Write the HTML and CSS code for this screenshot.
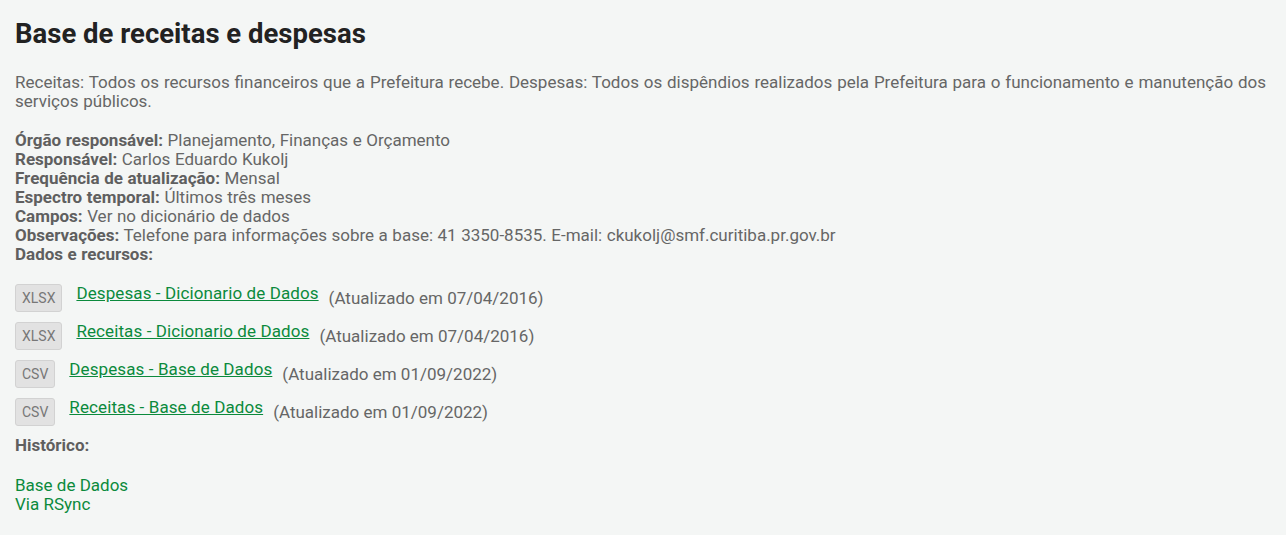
FILE: index.html
```html
<!DOCTYPE html>
<html lang="pt-BR">
<head>
<meta charset="utf-8">
<title>Base de receitas e despesas</title>
<link rel="stylesheet" href="styles.css">
</head>
<body>
<main class="page">
  <h1 class="title">Base de receitas e despesas</h1>
  <p class="desc">Receitas: Todos os recursos financeiros que a Prefeitura recebe. Despesas: Todos os dispêndios realizados pela Prefeitura para o funcionamento e manutenção dos serviços públicos.</p>
  <div class="meta">
    <div><b>Órgão responsável:</b> Planejamento, Finanças e Orçamento</div>
    <div><b>Responsável:</b> Carlos Eduardo Kukolj</div>
    <div><b>Frequência de atualização:</b> Mensal</div>
    <div><b>Espectro temporal:</b> Últimos três meses</div>
    <div><b>Campos:</b> Ver no dicionário de dados</div>
    <div><b>Observações:</b> Telefone para informações sobre a base: 41 3350-8535. E-mail: ckukolj@smf.curitiba.pr.gov.br</div>
    <div><b>Dados e recursos:</b></div>
  </div>
  <ul class="resources">
    <li class="res"><span class="badge">XLSX</span><a class="res-link" href="#">Despesas - Dicionario de Dados</a><span class="date">(Atualizado em 07/04/2016)</span></li>
    <li class="res"><span class="badge">XLSX</span><a class="res-link" href="#">Receitas - Dicionario de Dados</a><span class="date">(Atualizado em 07/04/2016)</span></li>
    <li class="res"><span class="badge">CSV</span><a class="res-link" href="#">Despesas - Base de Dados</a><span class="date">(Atualizado em 01/09/2022)</span></li>
    <li class="res"><span class="badge">CSV</span><a class="res-link" href="#">Receitas - Base de Dados</a><span class="date">(Atualizado em 01/09/2022)</span></li>
  </ul>
  <div class="history-label"><b>Histórico:</b></div>
  <div class="history">
    <a href="#">Base de Dados</a>
    <a href="#">Via RSync</a>
  </div>
</main>
</body>
</html>
```
FILE: styles.css
```css
html, body {
  margin: 0;
  padding: 0;
  background: #f4f6f5;
}
body {
  font-family: Roboto, "Liberation Sans", sans-serif;
  font-size: 17px;
  line-height: 19px;
  color: #666;
}
.page {
  padding: 16px 15px 20px 15px;
}
.title {
  margin: 0;
  font-size: 27.5px;
  line-height: 36px;
  font-weight: 700;
  color: #222;
}
.desc {
  margin: 21px 0 20px 0;
  word-spacing: 0.6px;
}
.meta {
  word-spacing: 0.3px;
}
.meta b, .history-label b {
  font-weight: 700;
  color: #5f5f5f;
}
.resources {
  list-style: none;
  margin: 20px 0 0 0;
  padding: 0;
  display: flex;
  flex-direction: column;
  gap: 10px;
}
.res {
  display: flex;
  align-items: center;
  height: 28px;
}
.badge {
  box-sizing: border-box;
  height: 28px;
  padding: 0 6px;
  display: flex;
  align-items: center;
  font-size: 14px;
  color: #777;
  background: #e2e2e2;
  border: 1px solid #d2d2d2;
  border-radius: 3px;
}
.res-link {
  margin-left: 14px;
  margin-bottom: 9px;
  color: #0b8a3c;
  text-decoration: underline;
  letter-spacing: 0.1px;
}
.date {
  margin-left: 10px;
}
.history-label {
  margin-top: 10px;
}
.history {
  margin-top: 21px;
  display: flex;
  flex-direction: column;
}
.history a {
  color: #0b8a3c;
  text-decoration: none;
}
```
